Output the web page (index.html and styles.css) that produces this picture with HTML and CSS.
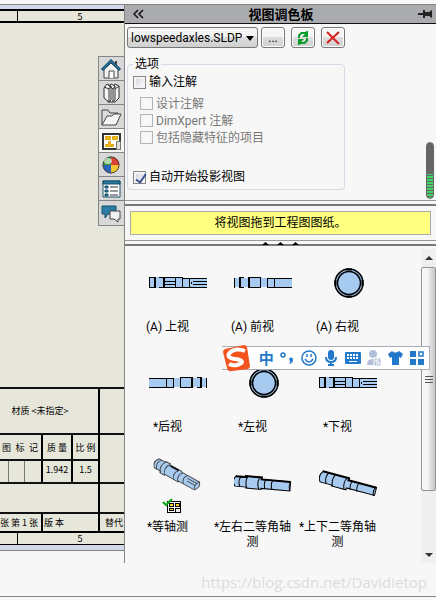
FILE: index.html
```html
<!DOCTYPE html>
<html lang="zh-CN">
<head>
<meta charset="utf-8">
<title>视图调色板</title>
<link rel="stylesheet" href="styles.css">
</head>
<body>
<svg class="defs" aria-hidden="true">
  <defs>
    <g id="shaft" fill="#a6caf0" stroke="#000" shape-rendering="crispEdges">
      <path stroke="none" d="M0 1h34v11H0zM34 2h24v9H34z"/>
      <path fill="none" d="M.5 1v11M0 1.500h6M10 1.500h23.500v10H10M0 11.500h6M33.500 2.500H58M33.500 11.500H58"/>
      <path fill="none" d="M40.500 2v9M26.500 1v10M15 5.500h11M15 8.500h11M58 5.500H43.500M42.500 6v2M43.500 8.500H58"/>
      <path stroke-width="2" d="M6 1v11M15 1v11"/>
    </g>
    <g id="plain" fill="#a6caf0" shape-rendering="crispEdges">
      <path d="M0 2h58v9H0z"/>
      <path stroke="#000" d="M.5 2v10M14.500 1.500h12v10h-12zM33.500 2v9M40.500 2v9M33 2.500h25M33 11.500h25M6 1.500h4M6 11.500h4"/>
      <path stroke="#000" stroke-width="2" d="M6 1v11M15 1v11"/>
    </g>
    <g id="disc">
      <circle cx="15" cy="15" r="14" fill="#a6caf0" stroke="#000" stroke-width="1.500"/>
      <circle cx="15" cy="15" r="11.500" fill="#a6caf0" stroke="#000" stroke-width="1.500"/>
      <path d="M12 1.500h6M12 28.500h6M1.500 12v6M28.500 12v6" stroke="#000" stroke-width="2"/>
    </g>
  </defs>
</svg>
<div class="topstrip"></div>
<main class="workspace">
  <section class="sheet" aria-label="工程图图纸">
    <div class="margin"></div>
    <div class="ruler top"><span></span><span>5</span></div>
    <div class="canvas">
      <nav class="tabs">
        <button aria-label="主页"><svg viewBox="0 0 24 22"><path d="M5 11v9h14v-9l-7-6z" fill="#f2f2f2" stroke="#444"/><path d="M10 20v-7h5v7" fill="#fff" stroke="#444"/><path d="M3 12l9-9 9 9" fill="none" stroke="#164f70" stroke-width="3"/><path d="M4 11l8-8 8 8" fill="none" stroke="#2c86b4"/><path d="M17 3v4" stroke="#444" stroke-width="2"/></svg></button>
        <button aria-label="设计库"><svg viewBox="0 0 24 22"><g fill="#f4f4f4" stroke="#333" stroke-linejoin="round"><path d="M13 6l3-4 4 2v12l-4 4h-3z"/><path d="M9 6l3-4 4 2v14l-3 2H9z"/><path d="M5 6l3-4 4 2v14l-2 2-5-4z"/><path d="M5 5l5 2 2-3M10 7v12M9 3l5 4 2-3M14 7v12M16 7l4-3" fill="none"/></g></svg></button>
        <button aria-label="文件探索器"><svg viewBox="0 0 24 22"><path d="M3 19V4h6l2 3h8v4" fill="#ddd" stroke="#444"/><path d="M3 19L8 10h5l2-2h7l-5 11z" fill="#f5f5f5" stroke="#444"/></svg></button>
        <button class="current" aria-label="视图调色板"><svg viewBox="0 0 24 22"><path d="M4 4h17v15H4z" fill="#fff" stroke="#333" stroke-width="2"/><g fill="#f4bd15" stroke="#dba414"><path d="M6.500 6.500h5v3h-5zM13.500 6.500h5v3h-5zM6.500 16.500h8v-2h-3v-3h-2v3h-3z"/></g><path d="M17.500 11.500h4v8h-4z" fill="#ddd" stroke="#777"/></svg></button>
        <button aria-label="外观"><svg viewBox="0 0 24 22"><circle cx="12" cy="11" r="8.500" fill="#eee"/><path d="M12 11V2.500A8.500 8.500 0 0 0 3.500 11z" fill="#3b9e36"/><path d="M12 11V2.500a8.500 8.500 0 0 1 8.500 8.500z" fill="#db4132"/><path d="M12 11H3.500a8.500 8.500 0 0 0 8.500 8.500z" fill="#2864b9"/><path d="M12 11h8.500a8.500 8.500 0 0 1-8.500 8.500z" fill="#f4c52e"/><circle cx="12" cy="11" r="8" fill="none" stroke="#444"/><ellipse cx="9" cy="7" rx="4" ry="3" fill="#fff" opacity=".6"/></svg></button>
        <button aria-label="自定义属性"><svg viewBox="0 0 24 22"><path d="M4 3h17v16H4z" fill="#fff" stroke="#1c5067"/><path d="M4 3h17v3H4z" fill="#267ca1" stroke="#174f69"/><path d="M6 8h3v2H6zM6 12h3v2H6zM6 16h3v2H6z" fill="#267ca1" stroke="#174f69"/><path d="M11 9h8M11 13h8M11 17h8" stroke="#333"/></svg></button>
        <button aria-label="论坛"><svg viewBox="0 0 24 22"><path d="M3 4h14v8H9l-3 4v-4H3z" fill="#2b7da3" stroke="#174f69"/><path d="M11 9h10v8h-2v3l-4-3h-4z" fill="#f2f2f2" stroke="#444"/></svg></button>
      </nav>
    </div>
    <div class="titleblock">
      <div class="fields">
        <div class="material">材质 &lt;未指定&gt;</div>
        <div class="row names"><span>图&ensp;标&ensp;记</span><span>质 量</span><span>比 例</span></div>
        <div class="row values"><span class="split"><i></i><i></i><i></i></span><span>1.942</span><span>1.5</span></div>
        <div class="blank"></div>
        <div class="row foot"><span>张 第 1 张</span><span class="wide">版 本</span></div>
      </div>
      <div class="side"><div></div><div></div><div></div><div>替代</div></div>
    </div>
    <div class="ruler bottom"><span></span><span>5</span></div>
    <div class="margin end"></div>
  </section>

  <aside class="palette">
    <header class="heading">
      <button class="plain" aria-label="折叠"><svg width="11" height="10" viewBox="0 0 11 10"><path d="M5 1L1 5l4 4M10 1L6 5l4 4" fill="none" stroke="#111" stroke-width="1.500"/></svg></button>
      <h1>视图调色板</h1>
      <button class="plain" aria-label="固定"><svg width="15" height="10" viewBox="0 0 15 10"><path d="M0 5h5" stroke="#222" stroke-width="2"/><path d="M5 1h2v2h4l3-2v8l-3-2H7v2H5z" fill="#222"/></svg></button>
    </header>
    <div class="options">
      <div class="toolbar">
        <div class="picker"><select aria-label="零件"><option>lowspeedaxles.SLDPRT</option></select></div>
        <button class="tool more">...</button>
        <button class="tool" aria-label="刷新"><svg width="12" height="14" viewBox="0 0 12 14"><path d="M1 7V4l3-3h4l2-1h1v6H5l3-3H5L3 5v2zM11 7v3l-3 3H4l-2 1H1V8h6l-3 3h3l2-2V7z" fill="#0a9c29"/></svg></button>
        <button class="tool" aria-label="清除"><svg width="14" height="14" viewBox="0 0 14 14"><path d="M1 1l12 12M13 1L1 12" stroke="#d92020" stroke-width="2"/></svg></button>
      </div>
      <fieldset>
        <legend>选项</legend>
        <label><input type="checkbox">输入注解</label>
        <label class="sub"><input type="checkbox" disabled>设计注解</label>
        <label class="sub"><input type="checkbox" disabled>DimXpert 注解</label>
        <label class="sub"><input type="checkbox" disabled>包括隐藏特征的项目</label>
        <label class="auto"><input type="checkbox" checked>自动开始投影视图</label>
      </fieldset>
      <div class="meter"></div>
    </div>
    <div class="divider"></div>
    <p class="hint">将视图拖到工程图图纸。</p>
    <div class="divider grip"><i></i><i></i><i></i></div>
    <div class="gallery">
      <div class="views">
        <figure><svg viewBox="0 0 59 50"><use href="#shaft" y="18"/></svg><figcaption>(A) 上视</figcaption></figure>
        <figure><svg viewBox="0 0 59 50"><use href="#plain" y="18"/></svg><figcaption>(A) 前视</figcaption></figure>
        <figure><svg viewBox="0 0 59 50"><use href="#disc" x="15" y="10"/></svg><figcaption>(A) 右视</figcaption></figure>
        <figure><svg viewBox="0 0 59 50"><use href="#plain" transform="translate(58 18) scale(-1 1)"/></svg><figcaption>*后视</figcaption></figure>
        <figure><svg viewBox="0 0 59 50"><use href="#disc" x="15" y="10"/></svg><figcaption>*左视</figcaption></figure>
        <figure><svg viewBox="0 0 59 50"><use href="#shaft" y="18"/></svg><figcaption>*下视</figcaption></figure>
        <figure><svg viewBox="0 0 59 50"><g transform="translate(9 3) rotate(29) scale(.95 .85)" fill="#a6caf0" stroke="#444"><path d="M0-3h8v-1h5v1h14v1h22q4 5-1 11H29v1H13v1H8v-2H0q-5-6 0-12z"/><path d="M3-3q-5 6 0 12M8-4q-5 8 0 15M13-3q-5 6 0 14M24-2q-5 6 0 12M29-2q-5 6 0 12M35-2q-5 5 0 11M49-2q-5 6 0 11M36 1h11M37 4h9" fill="none"/><path d="M14-2h10" stroke="#111" stroke-width="2"/></g></svg><svg class="mark" viewBox="0 0 20 16"><g shape-rendering="crispEdges"><path d="M5.500 3.500h13v11h-13z" fill="#fff" stroke="#000"/><path d="M7 5h5v4H7zM13 5h5v4h-5zM7 10h5v3H7z" fill="#000"/><path d="M8 6h3v2H8zM14 6h3v2h-3zM8 11h3v1H8z" fill="#ffdf20"/><path d="M13.500 10.500h5v4h-5z" fill="#eee" stroke="#000"/></g><path d="M1 4l3 3 6-6" fill="none" stroke="#09aa16" stroke-width="2"/></svg><figcaption>*等轴测</figcaption></figure>
        <figure><svg viewBox="0 0 59 50"><g transform="translate(0 17) rotate(5)" fill="#a6caf0" stroke="#000"><path d="M2 1h10v-1h16v2h29v9H28v1H13v-1H2q-4-5 0-10z"/><path d="M7 1q-3 5 0 10M14 0q-3 6 0 12M26 0q-3 6 0 12M32 2q-2 4 0 9M39 2q-2 4 0 9M57 2q-2 4 0 9" fill="none"/><path d="M2 1h10v-1h16v2h29" fill="none" stroke-width="2"/></g></svg><figcaption>*左右二等角轴测</figcaption></figure>
        <figure><svg viewBox="0 0 59 50"><g transform="translate(3 13) rotate(15)" fill="#a6caf0" stroke="#000"><path d="M1 0h27v2h29v8H28v2H13v-1H1q-4-5 0-11z"/><path d="M7 0q-3 5 0 11M14 0q-3 6 0 12M26 0q-3 6 0 12M32 2q-2 4 0 9M39 2q-2 4 0 9M56 2q-2 4 0 9" fill="none"/><path d="M1 0h27v2h29" fill="none" stroke-width="2"/></g></svg><figcaption>*上下二等角轴测</figcaption></figure>
      </div>
      <div class="scrollbar"><i class="up"></i><div class="thumb"><b></b><b></b><b></b></div><i class="down"></i></div>
    </div>
  </aside>
</main>
<footer class="blog"><span>https://blog.csdn.net/Davidietop</span></footer>
<div class="ime">
  <svg width="30" height="30" viewBox="0 0 30 30"><path d="M3 6L22 2q2 0 3 2l3 19q0 2-2 3L10 28q-4 1-5-3L1 9q0-2 2-3z" fill="#f3531d"/><path d="M23 8Q15 5 10 8c-6 4-4 7 3 8 9 1 9 4 2 6q-4 1-8-1" fill="none" stroke="#fff" stroke-width="4"/></svg>
  <span>中</span>
  <svg width="14" height="16" viewBox="0 0 14 16"><circle cx="3" cy="5" r="2" fill="none" stroke="#2278ca" stroke-width="1.500"/><path d="M9 9a2 2 0 1 1 4 1q0 3-4 4 2-2 1-3z" fill="#2278ca"/></svg>
  <svg width="16" height="16" viewBox="0 0 16 16"><circle cx="8" cy="8" r="7" fill="none" stroke="#2278ca" stroke-width="1.500"/><path d="M6 4v3M10 4v3M4 9q4 6 8 0" fill="none" stroke="#2278ca" stroke-width="1.500"/></svg>
  <svg width="14" height="16" viewBox="0 0 14 16"><rect x="4" width="6" height="10" rx="3" fill="#2278ca"/><path d="M2 7q0 5 5 5t5-5M7 12v3M4 15h6" fill="none" stroke="#2278ca" stroke-width="2"/></svg>
  <svg width="16" height="14" viewBox="0 0 16 14"><rect y="1" width="16" height="12" rx="1" fill="#2278ca"/><path d="M2 4h12M2 7h12" stroke="#fff" stroke-width="2" stroke-dasharray="2 1"/><path d="M4 10.500h8" stroke="#fff"/></svg>
  <svg width="14" height="16" viewBox="0 0 14 16"><circle cx="6" cy="4" r="4" fill="#b3c0dc"/><path d="M0 15q0-6 5-6h5v6z" fill="#b3c0dc"/><path d="M7 8h7v8H7z" fill="#b3c0dc" stroke="#fff"/><path d="M12 10H9v2h3v2H9" fill="none" stroke="#fff"/></svg>
  <svg width="15" height="14" viewBox="0 0 15 14"><path d="M4 0q3 3 7 0l4 3-2 4-2-1v8H4V6L2 7 0 3z" fill="#2278ca"/></svg>
  <svg width="14" height="14" viewBox="0 0 14 14"><path d="M0 0h6v6H0zM0 8h6v6H0zM8 8h6v6H8z" fill="#2278ca"/><rect x="9" y="1" width="4" height="4" fill="none" stroke="#2278ca" stroke-width="1.500"/></svg>
</div>
</body>
</html>
```
FILE: styles.css
```css
* { box-sizing: border-box; }
body {
  margin: 0;
  min-height: 100vh;
  display: flex;
  flex-direction: column;
  position: relative;
  background: #f7f7f7;
  color: #000;
  font: 12px/16px Roboto, "Noto Sans CJK SC", sans-serif;
}
button, select, input { font: inherit; margin: 0; }
svg { display: block; flex: none; }
.defs { position: absolute; width: 0; height: 0; }
.topstrip { height: 5px; border-bottom: 1px solid #858585; }
.workspace { display: flex; align-items: flex-start; }

.sheet { width: 124px; flex: none; background: #e6e6da; font: 9px/12px "Noto Sans CJK SC", sans-serif; }
.margin { height: 4px; background: #d3d8e8; }
.margin.end { height: 6px; border-bottom: 1px solid #858585; }
.ruler { display: flex; height: 14px; border-top: 2px solid #000; border-bottom: 2px solid #000; }
.ruler span:first-child { width: 18px; border-right: 1px solid #000; }
.ruler span:last-child { flex: 1; text-align: center; padding-left: 18px; }
.ruler.bottom { border-bottom-width: 1px; }
.canvas { height: 364px; position: relative; }
.tabs { position: absolute; right: 0; top: 33px; width: 26px; border: 1px solid #858585; border-right: 0; }
.tabs button { display: block; width: 100%; height: 24px; padding: 0; border: 0; border-bottom: 1px solid #858585; background: #d8d8d8; }
.tabs button:last-child { border-bottom: 0; }
.tabs .current { background: #f7f7f7; }
.tabs svg { width: 24px; height: 22px; }
.titleblock { display: flex; border-top: 2px solid #111; }
.fields { width: 100px; flex: none; border-right: 2px solid #000; text-align: center; white-space: nowrap; }
.fields > div { border-bottom: 2px solid #111; }
.material { height: 46px; line-height: 44px; padding-right: 18px; }
.row { display: flex; }
.row span { width: 30px; border-right: 2px solid #000; }
.row span:first-child { width: 43px; display: flex; justify-content: flex-end; padding-right: 3px; }
.row span:last-child { border-right: 0; flex: 1; }
.names { height: 26px; line-height: 26px; }
.values { height: 23px; line-height: 18px; }
.row .split:first-child { justify-content: flex-start; padding: 0; }
.row .split i { width: 17px; border-right: 1px solid #777; }
.row .split i:first-child { width: 9px; }
.row .split i:last-child { border: 0; }
.blank { height: 30px; }
.fields .foot { height: 17px; line-height: 18px; border: 0; }
.row .wide { text-align: left; padding-left: 1px; }
.side { flex: 1; min-width: 0; }
.side div { height: 46px; border-bottom: 2px solid #111; }
.side div:nth-child(2) { height: 49px; }
.side div:nth-child(3) { height: 30px; }
.side div:last-child { height: 17px; padding-left: 5px; border: 0; line-height: 18px; white-space: nowrap; }

.palette { flex: 1; min-width: 0; height: 558px; border-left: 1px solid #858585; display: flex; flex-direction: column; }
.heading { height: 19px; flex: none; display: flex; align-items: center; background: #a9abae; border-bottom: 1px solid #111; padding: 0 3px 0 8px; }
.heading h1 { flex: 1; margin: 0; text-align: center; font: bold 13px/16px "Noto Sans CJK SC", sans-serif; }
.plain { border: 0; padding: 0; background: none; }
.options { height: 176px; flex: none; padding: 3px 0 0 2px; position: relative; }
.toolbar { display: flex; gap: 6px; }
.picker { width: 131px; height: 21px; border: 1px solid #777; border-radius: 3px; background: linear-gradient(#f5f5f5 50%, #ddd 50%, #d0d0d0); display: flex; }
.picker select { width: 114px; padding: 0 0 0 3px; border: 0; background: none; color: #000; appearance: none; overflow: hidden; text-overflow: clip; }
.picker::after { content: ""; border: 4px solid transparent; border-top: 5px solid #000; border-bottom: 0; margin: 8px 0 0 4px; }
.tool { width: 24px; height: 21px; padding: 0; display: flex; align-items: center; justify-content: center; border: 1px solid #777; border-radius: 3px; background: linear-gradient(#f5f5f5 50%, #ddd 50%, #d0d0d0); box-shadow: inset 0 0 0 1px #fff; }
.more { margin-left: -3px; }
fieldset { width: 218px; height: 134px; margin: 8px 0 0; padding: 1px 5px; border: 1px solid #d3dce6; border-radius: 4px; }
legend { padding: 0 2px; line-height: 16px; }
label { display: flex; align-items: center; gap: 3px; height: 18px; }
label.sub { margin-left: 7px; height: 17px; color: #777; }
label.sub:nth-of-type(2) { margin-top: 4px; }
label.auto { margin-top: 22px; }
input[type=checkbox] { appearance: none; width: 13px; height: 13px; border: 1px solid #888; background: linear-gradient(135deg, #ccd0d8, #fff); box-shadow: inset 0 0 0 2px #f4f4f4; position: relative; }
input[type=checkbox]:disabled { border-color: #b4b4b4; background: #f9f9f9; }
input:checked::after { content: ""; position: absolute; left: 4px; top: 0; width: 4px; height: 9px; border: solid #3f5698; border-width: 0 2px 2px 0; rotate: 35deg; }
.meter { position: absolute; right: 2px; bottom: 1px; width: 8px; height: 57px; border: 1px solid #666; border-radius: 4px; background: linear-gradient(#666 31px, transparent 31px), repeating-linear-gradient(#3dd767 0 2px, #666 2px 3px); }
.divider { height: 6px; flex: none; border-top: 1px solid #999; border-bottom: 2px solid #777; }
.hint { height: 24px; flex: none; margin: 5px; border: 1px solid #aaa; background: #ffff80; text-align: center; line-height: 22px; }
.grip { display: flex; justify-content: center; gap: 8px; padding-top: 1px; }
.grip i { width: 7px; height: 3px; background: #000; clip-path: polygon(50% 0, 100% 100%, 0 100%); }
.gallery { flex: 1; min-height: 0; display: flex; justify-content: space-between; padding-top: 3px; }
.views { display: grid; grid-template-columns: repeat(3, 85px); grid-auto-rows: 100px; padding-top: 9px; }
figure { margin: 0; position: relative; }
figure > svg { width: 59px; height: 50px; margin-left: 24px; }
figcaption { margin-top: 12px; text-align: center; line-height: 15px; }
figure .mark { position: absolute; width: 20px; height: 16px; left: 37px; top: 40px; margin: 0; }
.scrollbar { width: 15px; background: #efefef; display: flex; flex-direction: column; align-items: center; }
.scrollbar .up { border: 4px solid transparent; border-bottom: 4px solid #333; border-top: 0; margin: 7px 0; }
.scrollbar .down { border: 4px solid transparent; border-top: 4px solid #333; border-bottom: 0; margin: auto 0 6px; }
.thumb { width: 15px; height: 224px; border: 1px solid #929292; border-radius: 2px; background: linear-gradient(90deg, #f6f6f6 40%, #c5c5c9); display: flex; flex-direction: column; align-items: center; justify-content: center; gap: 2px; }
.thumb b { width: 8px; height: 1px; background: #555; }
.blog { flex: 1; border-bottom: 1px solid #858585; margin-bottom: 3px; padding: 9px 9px 0; text-align: right; color: #dcdcdc; font: 15px/20px "Open Sans", sans-serif; }
.ime { position: absolute; left: 222px; top: 346px; width: 208px; height: 24px; display: flex; align-items: center; justify-content: space-between; padding-right: 5px; border: 1px solid #aaacb5; border-left: 0; background: linear-gradient(90deg, transparent 12px, #fff 12px); }
.ime span { color: #2278ca; font: bold 15px/20px "Noto Sans CJK SC", sans-serif; }
```
